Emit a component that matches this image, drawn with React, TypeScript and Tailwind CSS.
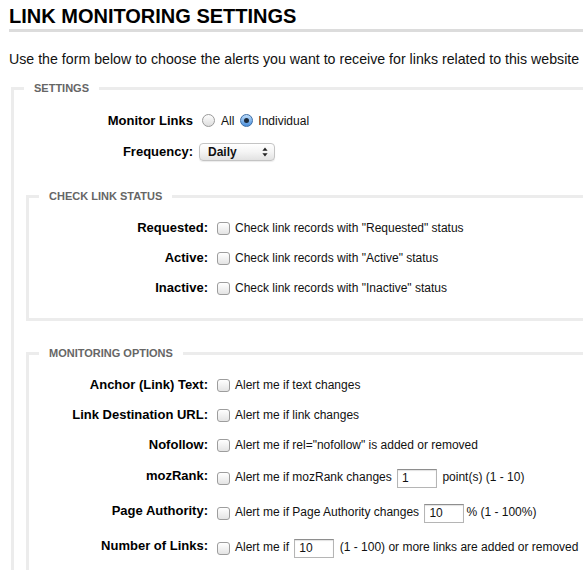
import React from "react";

const font = { fontFamily: '"Liberation Sans", Arial, Helvetica, sans-serif' };

function Radio({ checked }: { checked?: boolean }) {
  if (checked) {
    return (
      <span className="flex h-[13px] w-[13px] items-center justify-center rounded-full border border-[#3d6ea6] bg-gradient-to-b from-[#bcdcfb] to-[#4a90dc]">
        <span className="h-[5px] w-[5px] rounded-full bg-[#1c2b3c]" />
      </span>
    );
  }
  return (
    <span className="block h-[13px] w-[13px] rounded-full border border-[#9a9a9a] bg-gradient-to-b from-[#fdfdfd] to-[#dedede]" />
  );
}

function Checkbox() {
  return (
    <span className="ml-[3px] mr-[5px] block h-[13px] w-[13px] shrink-0 rounded-[3px] border border-[#9d9d9d] bg-gradient-to-b from-white to-[#e4e4e4]" />
  );
}

function Field({ value }: { value: string }) {
  return (
    <span className="mx-[2px] inline-flex h-[19px] w-[40px] items-center border border-[#b5b5b5] border-t-[#8e8e8e] bg-white pl-[4px] align-middle text-[12px] shadow-[inset_0_1px_1px_rgba(0,0,0,0.12)]">
      {value}
    </span>
  );
}

function Legend({ children }: { children: React.ReactNode }) {
  return (
    <legend className="ml-[10px] px-[10px] text-[11px] font-bold leading-[14px] text-[#666]">
      {children}
    </legend>
  );
}

function Row({
  label,
  children,
  h = "h-[30px]",
  lift = false,
}: {
  label: string;
  children: React.ReactNode;
  h?: string;
  lift?: boolean;
}) {
  return (
    <div className={`flex items-center ${h}`}>
      <div className={`w-[173px] shrink-0 pr-[6px] text-right text-[13px] font-bold text-black ${lift ? "mb-[4px]" : ""}`}>
        {label}
      </div>
      {children}
    </div>
  );
}

const statusRows = [
  { label: "Requested:", text: 'Check link records with "Requested" status' },
  { label: "Active:", text: 'Check link records with "Active" status' },
  { label: "Inactive:", text: 'Check link records with "Inactive" status' },
];

export default function App() {
  return (
    <div className="h-[570px] w-full overflow-hidden bg-white text-[#111]" style={font}>
      <div className="w-[720px] px-[9px]">
        <h1 className="border-b-[3px] border-[#dcdcdc] pb-[1px] pt-[4px] text-[20px] font-bold leading-[24px] text-black">
          LINK MONITORING SETTINGS
        </h1>
        <p className="mt-[19px] text-[14.2px] leading-[16px] text-[#111]">
          Use the form below to choose the alerts you want to receive for links related to this website
        </p>

        <fieldset className="ml-[2px] mt-[14px] border-[3px] border-[#ececec]">
          <Legend>SETTINGS</Legend>
          <div className="pl-[12px] pr-[12px] pt-[10px]">
            <Row label="Monitor Links" h="h-[31px]">
              <div className="flex items-center text-[12px]">
                <span className="ml-[3px]">
                  <Radio />
                </span>
                <span className="ml-[6px]">All</span>
                <span className="ml-[6px]">
                  <Radio checked />
                </span>
                <span className="ml-[5px]">Individual</span>
              </div>
            </Row>
            <Row label="Frequency:" h="h-[31px]">
              <div className="flex h-[18px] w-[76px] items-center justify-between rounded-[4px] border border-[#c4c4c4] bg-gradient-to-b from-white via-[#f4f4f4] to-[#e2e2e2] pl-[8px] pr-[6px] shadow-[0_1px_1px_rgba(0,0,0,0.08)]">
                <span className="text-[12px] font-bold text-[#111]">Daily</span>
                <svg width="6" height="10" viewBox="0 0 6 10">
                  <path d="M3 0.5 L5.6 3.8 H0.4 Z" fill="#222" />
                  <path d="M3 9.5 L5.6 6.2 H0.4 Z" fill="#222" />
                </svg>
              </div>
            </Row>

            <fieldset className="mt-[22px] border-[3px] border-[#ececec]">
              <Legend>CHECK LINK STATUS</Legend>
              <div className="pb-[15px] pl-[12px] pt-[10px]">
                {statusRows.map((r) => (
                  <Row key={r.label} label={r.label}>
                    <Checkbox />
                    <span className="text-[12px]">{r.text}</span>
                  </Row>
                ))}
              </div>
            </fieldset>

            <fieldset className="mt-[25px] border-[3px] border-[#ececec]">
              <Legend>MONITORING OPTIONS</Legend>
              <div className="pb-[15px] pl-[12px] pt-[10px]">
                <Row label="Anchor (Link) Text:">
                  <Checkbox />
                  <span className="text-[12px]">Alert me if text changes</span>
                </Row>
                <Row label="Link Destination URL:">
                  <Checkbox />
                  <span className="text-[12px]">Alert me if link changes</span>
                </Row>
                <Row label="Nofollow:">
                  <Checkbox />
                  <span className="text-[12px]">Alert me if rel="nofollow" is added or removed</span>
                </Row>
                <Row label="mozRank:" h="h-[36px]" lift>
                  <Checkbox />
                  <span className="whitespace-nowrap text-[12px]">
                    Alert me if mozRank changes <Field value="1" /> point(s) (1 - 10)
                  </span>
                </Row>
                <Row label="Page Authority:" h="h-[34px]" lift>
                  <Checkbox />
                  <span className="whitespace-nowrap text-[12px]">
                    Alert me if Page Authority changes <Field value="10" />% (1 - 100%)
                  </span>
                </Row>
                <Row label="Number of Links:" h="h-[36px]" lift>
                  <Checkbox />
                  <span className="whitespace-nowrap text-[12px]">
                    Alert me if <Field value="10" /> (1 - 100) or more links are added or removed
                  </span>
                </Row>
              </div>
            </fieldset>
          </div>
        </fieldset>
      </div>
    </div>
  );
}
